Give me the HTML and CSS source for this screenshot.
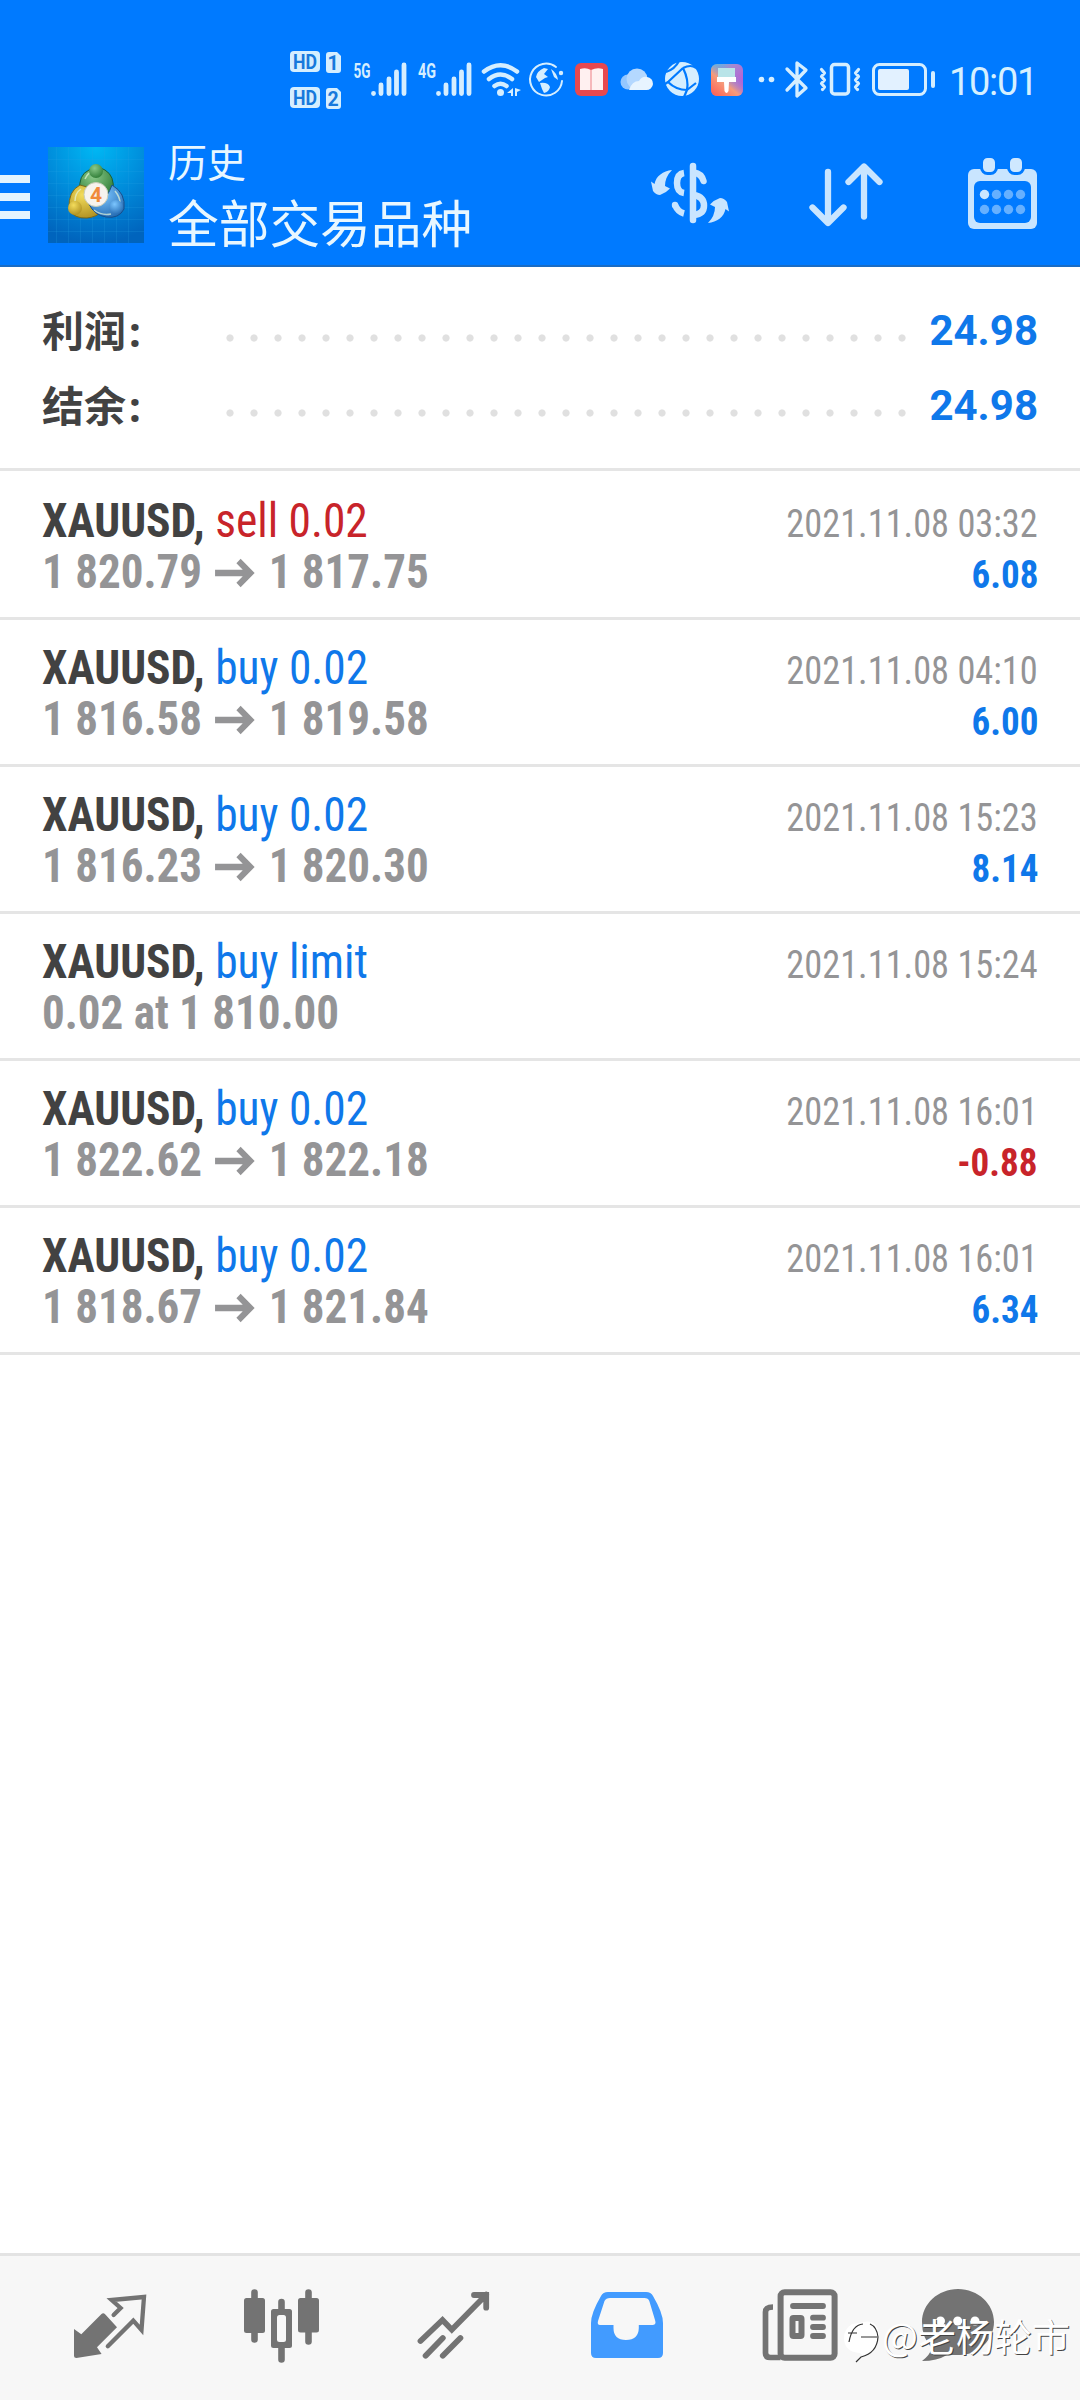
FILE: index.html
```html
<!DOCTYPE html>
<html lang="zh-CN">
<head>
<meta charset="utf-8">
<title>历史</title>
<link rel="stylesheet" href="styles.css">
</head>
<body>
<header class="top">
  <div class="status">
    <svg width="70" height="64" viewBox="280 47 70 64"><rect x="290" y="51" width="30" height="21" rx="4" fill="#d5eeff"/><rect x="290" y="87" width="30" height="21" rx="4" fill="#d5eeff"/><path d="M329 52h8l4 4v14q0 3-3 3h-9q-3 0-3-3V55q0-3 3-3zM329 88h8l4 4v14q0 3-3 3h-9q-3 0-3-3V91q0-3 3-3z" fill="#d5eeff"/><g class="badge-text"><text x="305" y="68.500" textLength="24" lengthAdjust="spacingAndGlyphs">HD</text><text x="305" y="104.500" textLength="24" lengthAdjust="spacingAndGlyphs">HD</text><text x="333" y="69.500">1</text><text x="333" y="105.500">2</text></g></svg>
    <svg width="62" height="64" viewBox="350 47 62 64"><text class="net" x="353.500" y="78" textLength="17" lengthAdjust="spacingAndGlyphs">5G</text><path class="bars" d="M373.500 93.300v.2M381 85v8.500M389 79v14.500M396.500 72v21.500M404 65v28.500"/></svg>
    <svg width="64" height="64" viewBox="412 47 64 64"><text class="net" x="418" y="78" textLength="18" lengthAdjust="spacingAndGlyphs">4G</text><path class="bars" d="M438.500 93.300v.2M446 85v8.500M454 79v14.500M461.500 72v21.500M469 65v28.500"/></svg>
    <svg width="49" height="64" viewBox="476 47 49 64"><g class="line" stroke-width="4.500"><path d="M484 71.500q16.500-12.500 33 0M489 79q11.500-9 23 0M494.500 86q6-4.500 12 0"/></g><circle cx="500.500" cy="92.500" r="3.500" fill="#d5eeff"/><path d="M513 88v8h-2v-3h-4zM515 88v8h2v-4l4-2z" fill="#d5eeff"/></svg>
    <svg width="45" height="64" viewBox="525 47 45 64"><path class="line" stroke-width="2" d="M556 67A16 16 0 1 0 562 81"/><circle cx="561" cy="73" r="2.200" fill="#d5eeff"/><path d="M544 68q-7 3-8 9l3 5 6-4 3-1-4-3 4-5zM540 83q8-1 10 4-1 5-6 6l-2-4zM551 69q6 4 7 11l-4-3z" fill="#d5eeff"/></svg>
    <svg width="45" height="64" viewBox="570 47 45 64"><rect x="575" y="63" width="33" height="33" rx="6" fill="#e8484f"/><path d="M580 69q6-2 11 1 6-3 12-1v21h-23z" fill="#fff0f0"/><path d="M591 70v20" stroke="#f3a4a8" stroke-width="1.500"/></svg>
    <svg width="43" height="64" viewBox="615 47 43 64"><circle cx="628" cy="82" r="7.500" fill="#94c7ff"/><circle cx="637" cy="79" r="10.500" fill="#b4d8ff"/><path d="M629 90q3-9 10-9 3-5 8-4a6.500 6.500 0 0 1-1 13z" fill="#e7f4ff"/></svg>
    <svg width="46" height="64" viewBox="658 47 46 64"><circle cx="682" cy="79" r="17" fill="#d5eeff"/><path d="M679 61q-4 8-13 11M683 68q8-4 13 0M683 68l-15 14M683 68q6 12 4 22M668 82q8 8 19 8M687 90l9-7M687 90l-3 7M668 82l-3 2" fill="none" stroke="#007aff" stroke-width="2.200"/></svg>
    <svg width="48" height="64" viewBox="704 47 48 64"><defs><linearGradient id="brush" x1="0" y1="0" x2="1" y2="1"><stop offset="0" stop-color="#42c9e9"/><stop offset=".35" stop-color="#a38bd0"/><stop offset="1" stop-color="#c445d8"/></linearGradient><linearGradient id="warm" x1="0" y1="1" x2=".8" y2="0"><stop offset="0" stop-color="#ff5a4f"/><stop offset=".45" stop-color="#f59c7b"/><stop offset=".8" stop-color="#6e91ef" stop-opacity="0"/></linearGradient></defs><rect x="711" y="64" width="32" height="32" rx="6" fill="url(#brush)"/><rect x="711" y="64" width="32" height="32" rx="6" fill="url(#warm)"/><path d="M718 68h17v9h-17z" fill="#b9e4e8"/><path d="M717 77h19v5h-7l-.500 9q-2 4-4 0l-.500-9h-7z" fill="#fff"/></svg>
    <svg width="28" height="64" viewBox="752 47 28 64"><circle cx="761.500" cy="79.500" r="2.800" fill="#d5eeff"/><circle cx="771.500" cy="79.500" r="2.800" fill="#d5eeff"/></svg>
    <svg width="34" height="64" viewBox="780 47 34 64"><path class="line" stroke-width="3.300" d="M787 69l19 19-9 8V63l9 7-19 20"/></svg>
    <svg width="52" height="64" viewBox="814 47 52 64"><rect x="831.500" y="64.500" width="17" height="29.500" rx="3" class="line" stroke-width="3.500"/><path class="line" stroke-width="3.200" d="M821.500 69.500l3 3.500-3 3.500 3 3.500-3 3.500 3 3.500-2 2.500M858.500 69.500l-3 3.500 3 3.500-3 3.500 3 3.500-3 3.500 2 2.500"/></svg>
    <svg width="80" height="64" viewBox="866 47 80 64"><rect x="873.500" y="64.500" width="52" height="30" rx="6" class="line" stroke-width="3"/><rect x="878" y="69" width="31" height="21" rx="2" fill="#e2f1ff"/><path class="line" stroke-width="4" d="M933 73v13"/></svg>
    <span class="clock">10:01</span>
  </div>
  <div class="appbar">
    <div class="menu"><i></i><i></i><i></i></div>
    <svg class="logo" width="96" height="96" viewBox="0 0 96 96">
      <defs><radialGradient id="sky" cx=".5" cy="0" r="1"><stop offset="0" stop-color="#00b8f4"/><stop offset=".55" stop-color="#0089d9"/><stop offset="1" stop-color="#0064bd"/></radialGradient>
      <radialGradient id="gr" cx=".4" cy=".3" r=".8"><stop offset="0" stop-color="#8ac98a"/><stop offset="1" stop-color="#27762f"/></radialGradient>
      <radialGradient id="ye" cx=".4" cy=".3" r=".8"><stop offset="0" stop-color="#f3dc5c"/><stop offset="1" stop-color="#a98a1c"/></radialGradient>
      <radialGradient id="bl" cx=".4" cy=".3" r=".8"><stop offset="0" stop-color="#7cc6ff"/><stop offset="1" stop-color="#2066ae"/></radialGradient></defs>
      <path d="M0 0h96v96H0z" fill="url(#sky)"/>
      <path d="M8.500 0v96M20.500 0v96M32.500 0v96M44.500 0v96M56.500 0v96M68.500 0v96M80.500 0v96M0 12.500h96M0 24.500h96M0 36.500h96M0 48.500h96M0 60.500h96M0 72.500h96M0 84.500h96" stroke="#28a6e6" stroke-opacity=".2"/>
      <path d="M32 44Q30 28 41 23q8-5 16 0 10 6 8 21-6 9-17 6-10 0-16-6z" fill="url(#gr)" stroke="#195f37" stroke-width="1"/>
      <path d="M32 38Q20 44 21 62q5 10 18 9 10-1 15-7Q40 58 39 40z" fill="url(#ye)" stroke="#77691b" stroke-width="1"/>
      <path d="M64 38q14 8 12 24-5 10-18 8-12-2-17-13 14 5 23-19z" fill="url(#bl)" stroke="#174f8c" stroke-width="1"/>
      <path d="M37 32q3-7 8-7M27 54q0-8 6-12M67 44q5 6 5 12M46 63q8 6 17 4" fill="none" stroke="#e4f5d8" stroke-opacity=".7" stroke-width="1.500"/>
      <circle cx="48" cy="24" r="7" fill="url(#gr)"/><circle cx="27" cy="61" r="7" fill="url(#ye)"/><circle cx="68" cy="60" r="7" fill="url(#bl)"/>
      <circle cx="48" cy="47.500" r="12" fill="#f7f3ee" stroke="#c9cdb9"/><text class="logo-num" x="48" y="55">4</text>
    </svg>
    <div class="titles"><div class="sub">历史</div><div class="main">全部交易品种</div></div>
    <svg width="150" height="96" viewBox="620 147 150 96" fill="#c9e5ff"><path d="M672 170C663 171 656 176 654.500 184L651 181.500 653 191Q656 195 660 195 666 193 670 188.500L665 186Q665 177 672 170Z"/><path d="M708 223C717 222 724 217 725.500 209L729 211.500 727 202Q724 198 720 198 714 200 710 204.500L715 207Q715 216 708 223Z"/><g fill="none" stroke="#c9e5ff" stroke-width="6.500"><path d="M693 166v54" stroke-linecap="round"/><path d="M703.500 181q-2-7.500-9.500-8.500" stroke-linecap="round"/><path d="M694 195q10 2 10 10.500t-10 9.500M684 173q-7 1-7 10t7 10M675 205"/><path d="M675 205q3 7 9 8.500"/></g><circle cx="675" cy="205" r="3.200"/></svg>
    <svg width="160" height="96" viewBox="770 147 160 96"><path d="M828 172v50M812.500 207.500L828 223l15.500-15.500M864 216.500V167M848.500 182L864 166.500 879.500 182" fill="none" stroke="#c9e5ff" stroke-width="6.300" stroke-linecap="round" stroke-linejoin="round"/></svg>
    <svg width="150" height="96" viewBox="930 147 150 96"><rect x="968" y="169" width="69" height="60" rx="6" fill="#c9e5ff"/><rect x="974" y="181" width="57" height="42" rx="6" fill="#007aff"/><g fill="#cfe8ff" stroke="#007aff" stroke-width="3"><rect x="981.500" y="156.500" width="15" height="17" rx="6"/><rect x="1008.500" y="156.500" width="15" height="17" rx="6"/></g><g fill="#66b0ff"><circle cx="984.500" cy="194.500" r="4.700" fill="#c9e5ff"/><circle cx="996.500" cy="194.500" r="4.700"/><circle cx="1008.500" cy="194.500" r="4.700"/><circle cx="1020.500" cy="194.500" r="4.700"/><circle cx="984.500" cy="209.500" r="4.700"/><circle cx="996.500" cy="209.500" r="4.700"/><circle cx="1008.500" cy="209.500" r="4.700"/><circle cx="1020.500" cy="209.500" r="4.700"/></g></svg>
  </div>
</header>
<section class="summary">
  <div class="sum"><span class="label">利润<i>:</i></span><span class="dots"></span><b>24.98</b></div>
  <div class="sum"><span class="label">结余<i>:</i></span><span class="dots"></span><b>24.98</b></div>
</section>
<main>
  <article class="deal"><div class="line1"><span class="name"><b>XAUUSD,</b> <span class="sell">sell 0.02</span></span><time>2021.11.08 03:32</time></div><div class="line2"><span class="price">1 820.79 <svg class="arrow" viewBox="0 0 42 30"><path d="M0 15h37M25 3l12.500 12L25 27"/></svg> 1 817.75</span><span class="profit">6.08</span></div></article>
  <article class="deal"><div class="line1"><span class="name"><b>XAUUSD,</b> <span class="buy">buy 0.02</span></span><time>2021.11.08 04:10</time></div><div class="line2"><span class="price">1 816.58 <svg class="arrow" viewBox="0 0 42 30"><path d="M0 15h37M25 3l12.500 12L25 27"/></svg> 1 819.58</span><span class="profit">6.00</span></div></article>
  <article class="deal"><div class="line1"><span class="name"><b>XAUUSD,</b> <span class="buy">buy 0.02</span></span><time>2021.11.08 15:23</time></div><div class="line2"><span class="price">1 816.23 <svg class="arrow" viewBox="0 0 42 30"><path d="M0 15h37M25 3l12.500 12L25 27"/></svg> 1 820.30</span><span class="profit">8.14</span></div></article>
  <article class="deal"><div class="line1"><span class="name"><b>XAUUSD,</b> <span class="buy">buy limit</span></span><time>2021.11.08 15:24</time></div><div class="line2"><span class="price">0.02 at 1 810.00</span></div></article>
  <article class="deal"><div class="line1"><span class="name"><b>XAUUSD,</b> <span class="buy">buy 0.02</span></span><time>2021.11.08 16:01</time></div><div class="line2"><span class="price">1 822.62 <svg class="arrow" viewBox="0 0 42 30"><path d="M0 15h37M25 3l12.500 12L25 27"/></svg> 1 822.18</span><span class="profit loss">-0.88</span></div></article>
  <article class="deal"><div class="line1"><span class="name"><b>XAUUSD,</b> <span class="buy">buy 0.02</span></span><time>2021.11.08 16:01</time></div><div class="line2"><span class="price">1 818.67 <svg class="arrow" viewBox="0 0 42 30"><path d="M0 15h37M25 3l12.500 12L25 27"/></svg> 1 821.84</span><span class="profit">6.34</span></div></article>
</main>
<nav class="tabs">
  <svg viewBox="24 2256 172 144"><path d="M74 2329l7.300 5.300L101.500 2314q1.700-1.700 3.400 0L117 2327.300 97 2347.300l4.600 6.700L76.400 2358q-2.400 0-2.400-2z" fill="#737373"/><path d="M113.600 2315l7-7-9-8 32.400-3-2.500 33-8.200-9.300-25.500 25.600" fill="none" stroke="#737373" stroke-width="4.300" stroke-linecap="round"/></svg>
  <svg viewBox="196 2256 172 144"><path d="M254.500 2292.500v47M281.500 2302v57.500M308.500 2292.500v49" stroke="#737373" stroke-width="6.600" stroke-linecap="round"/><rect x="244" y="2298" width="21" height="35" rx="2.500" fill="#737373"/><rect x="298" y="2298" width="21" height="34.500" rx="2.500" fill="#737373"/><rect x="271" y="2309" width="21" height="39" rx="2.500" fill="#737373"/><rect x="277" y="2315" width="9" height="27" rx="2.500" fill="#f7f7f7"/></svg>
  <svg viewBox="368 2256 172 144"><path d="M420.500 2341l22-21 9.300 9.700 34.400-35M474 2295h12.200v12.700M425.600 2355.700l17.200-17.700M442.800 2355.700l17.600-17.700" fill="none" stroke="#737373" stroke-width="5.800" stroke-linecap="round"/></svg>
  <svg viewBox="540 2256 172 144"><path fill-rule="evenodd" d="M608 2292h38q5 0 7 4 10 17 10 27v30q0 5-5 5h-62q-5 0-5-5v-30q0-10 10-27 2-4 7-4zM610 2298q-4 0-5.500 3l-6.500 20q-1 4 2 4h13.500v3q0 12 12.500 12t12.800-12v-3h13.500q4 0 3-4l-6-20q-1-3-5-3z" fill="#429bff"/></svg>
  <svg viewBox="712 2256 172 144"><rect x="780.600" y="2292.300" width="54" height="65.500" rx="4" fill="none" stroke="#737373" stroke-width="6"/><path d="M773 2307q-7.500 0-7.500 5v41q0 4.500 5 4.500h10" fill="none" stroke="#737373" stroke-width="5.700"/><rect x="792.500" y="2318" width="9" height="18" rx="1" fill="none" stroke="#737373" stroke-width="6"/><path d="M793 2306h30M813 2317.700h10M813 2327h10M813 2336h10" stroke="#737373" stroke-width="5.800" stroke-linecap="round"/></svg>
  <svg viewBox="884 2256 172 144"><path d="M958 2289c20 0 36 15 36 33s-16 33-34 33h-13q-10 6-25 6 8-6 10-13-10-10-10-26c0-18 16-33 36-33z" fill="#737373"/><g fill="#fff"><circle cx="940.500" cy="2321" r="4.500"/><circle cx="957.700" cy="2321" r="4.500"/><circle cx="975" cy="2321" r="4.500"/></g></svg>
  <div class="mark"><svg width="40" height="48" viewBox="842 2316 40 48"><path d="M859 2323q18-6 20 11 0 17-15 23l-4-4q-16-1-16-15 0-9 8-14z" fill="#fff"/><path d="M849 2342q3-17 14-18M848 2333h9M861 2337h16M856 2362l5-5q16-4 17-20-1-10-8-13" fill="none" stroke="#333" stroke-width="1.200"/></svg><span>@老杨轮市</span></div>
</nav>
</body>
</html>
```
FILE: styles.css
```css
* { box-sizing: border-box; }
body {
  margin: 0;
  width: 1080px;
  height: 2400px;
  display: flex;
  flex-direction: column;
  background: #fff;
  font-family: Roboto, "Noto Sans CJK SC", sans-serif;
  overflow: hidden;
}
svg { display: block; flex: none; }
.top { height: 267px; background: #007aff; border-bottom: 2px solid #1a6cc4; }
.status { display: flex; padding: 47px 0 0 280px; height: 147px; }
.line { fill: none; stroke: #d5eeff; stroke-linecap: round; stroke-linejoin: round; }
.bars { stroke: #d5eeff; stroke-width: 4.8; stroke-linecap: round; }
.badge-text { font: 700 19.5px Roboto, sans-serif; fill: #1779dc; text-anchor: middle; }
.net { font: 700 21px Roboto, sans-serif; fill: #d5eeff; }
.clock { margin-left: 3px; padding-top: 3px; font-size: 38px; letter-spacing: -1.3px; line-height: 64px; color: #d5f0ff; }
.appbar { display: flex; height: 96px; }
.menu { width: 48px; padding-top: 28px; display: flex; flex-direction: column; gap: 10px; }
.menu i { width: 30px; height: 8px; background: #e3f4ff; }
.logo-num { font: 700 21px Roboto, sans-serif; fill: #f08a3c; text-anchor: middle; }
.titles { width: 476px; padding-left: 24px; color: #e8f7ff; }
.sub { font-size: 39px; line-height: 40px; margin-top: -3px; }
.main { font-size: 50.7px; line-height: 60px; margin-top: 12px; }
.summary { height: 204px; padding: 25px 42px 0; border-bottom: 3px solid #e5e5e5; }
.sum { display: flex; align-items: center; height: 75px; }
.label { width: 173px; padding-bottom: 2px; font-size: 42px; font-weight: 700; color: #424242; }
.label i { font-style: normal; font-family: "Noto Sans", sans-serif; margin-left: 3px; }
.dots { flex: none; width: 696px; height: 8px; margin-top: 16px; background: radial-gradient(circle at 15px 4px, #e0e0e0 3.2px, transparent 4px) 0 0 / 24px 8px; }
.sum b { margin-left: auto; padding-top: 2px; font-size: 42px; color: #0f78ea; }
.deal { height: 147px; padding: 22px 42px 0; border-bottom: 3px solid #e5e5e5; font-family: "Roboto Condensed", Roboto, sans-serif; font-stretch: 75%; }
.deal:first-child { height: 149px; padding-top: 24px; }
.line1, .line2 { display: flex; justify-content: space-between; align-items: baseline; height: 51px; line-height: 51px; white-space: nowrap; }
.name, .price { transform-origin: left; }
time, .profit { transform-origin: right; }
.name { font-size: 48px; transform: scaleX(.947); color: #424242; }
.sell { color: #c8242a; }
.buy { color: #0f78ea; }
time { font-size: 39px; transform: scaleX(.932); color: #949496; }
.price { font-size: 48px; font-weight: 700; transform: scaleX(.938); color: #949496; }
.arrow { display: inline-block; width: 45px; height: 30px; margin: 0 3px 0 1px; fill: none; stroke: #949496; stroke-width: 6.5; }
.profit { font-size: 39px; font-weight: 700; transform: scaleX(.95); color: #0f78ea; }
.loss { color: #c8242a; }
.tabs { position: relative; margin-top: auto; height: 147px; padding: 0 24px; display: flex; background: #f7f7f7; border-top: 3px solid #e3e3e3; }
.tabs > svg { width: 172px; height: 144px; }
.mark { position: absolute; left: 842px; top: 60px; display: flex; }
.mark span { margin-top: -5px; font-size: 38px; line-height: 48px; font-family: "Noto Sans CJK SC", sans-serif; color: #fff; text-shadow: 1px 1px 0 #444; }
```
